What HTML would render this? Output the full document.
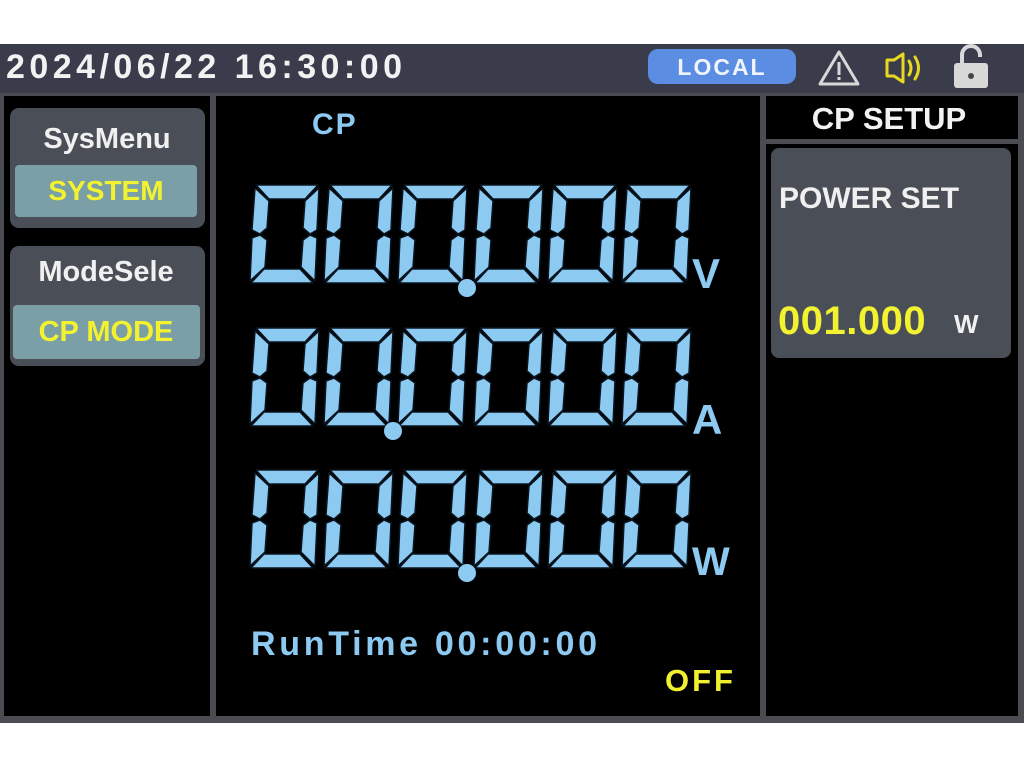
<!DOCTYPE html>
<html><head><meta charset="utf-8"><style>
html,body{margin:0;padding:0;background:#fff;width:1024px;height:768px;overflow:hidden}
svg{display:block}
text{font-family:"Liberation Sans",sans-serif;font-weight:bold}
</style></head><body>
<svg width="1024" height="768" viewBox="0 0 1024 768" xmlns="http://www.w3.org/2000/svg">
<defs>
<g id="d" fill="#8ccaf2" stroke="#0a1520" stroke-width="1.5" stroke-linejoin="round">
<polygon points="4,0 66,0 53,14 17,14"/>
<polygon points="3,3 17,16 15,43 8,49 0,45"/>
<polygon points="67,3 65,45 58,49 51,43 53,16"/>
<polygon points="0,53 8,50 15,55 13,82 -2,96"/>
<polygon points="65,53 63,96 49,82 51,55 58,50"/>
<polygon points="-1,98 61,98 48,84 12,84"/>
</g>
</defs>
<rect x="0" y="0" width="1024" height="768" fill="#fff"/>
<rect x="0" y="44" width="1024" height="679" fill="#4a4c52"/>
<rect x="0" y="44" width="1024" height="49" fill="#3a3c4b"/>
<rect x="4" y="96" width="206" height="620" fill="#000"/>
<rect x="216" y="96" width="544" height="620" fill="#000"/>
<rect x="766" y="96" width="252" height="620" fill="#000"/>
<rect x="766" y="139" width="252" height="5" fill="#4a4c52"/>
<text x="6" y="78" fill="#f2f2f2" font-size="34" textLength="396" lengthAdjust="spacing">2024/06/22 16:30:00</text>
<rect x="648" y="49" width="148" height="35" rx="10" fill="#5b8de2"/>
<text x="722" y="75" fill="#f0f4ff" font-size="23" text-anchor="middle" letter-spacing="2">LOCAL</text>
<polygon points="839,52 858,84 820,84" fill="none" stroke="#d8d8d8" stroke-width="3" stroke-linejoin="round"/>
<rect x="837.5" y="62" width="3" height="13" fill="#d8d8d8"/>
<rect x="837.5" y="77" width="3" height="3" fill="#d8d8d8"/>
<path d="M887,60 h7 l9,-6 v28 l-9,-6 h-7 z" fill="none" stroke="#e8d820" stroke-width="3" stroke-linejoin="round"/>
<path d="M909,61 q4,7 0,14 M915,57 q7,11 0,22" fill="none" stroke="#e8d820" stroke-width="3" stroke-linecap="round"/>
<path d="M962,64 v-9 a9,9 0 0 1 18,0 v2" fill="none" stroke="#d8d8d8" stroke-width="4"/>
<rect x="954" y="63" width="34" height="25" rx="3" fill="#d8d8d8"/>
<circle cx="971" cy="76" r="3" fill="#444"/>
<rect x="10" y="108" width="195" height="120" rx="9" fill="#4a4e57"/>
<rect x="15" y="165" width="182" height="52" rx="4" fill="#7a9fa6"/>
<text x="107" y="148" fill="#f0f0f0" font-size="29" text-anchor="middle">SysMenu</text>
<text x="106" y="200" fill="#f2f230" font-size="28" text-anchor="middle">SYSTEM</text>
<rect x="10" y="246" width="195" height="120" rx="9" fill="#4a4e57"/>
<rect x="13" y="305" width="187" height="54" rx="4" fill="#7a9fa6"/>
<text x="106" y="281" fill="#f0f0f0" font-size="29" text-anchor="middle">ModeSele</text>
<text x="106" y="341" fill="#f2f230" font-size="29" text-anchor="middle">CP MODE</text>
<text x="312" y="134" fill="#8ccaf2" font-size="30" letter-spacing="2">CP</text>
<g>
<use href="#d" x="252" y="185"/><use href="#d" x="326" y="185"/><use href="#d" x="400" y="185"/>
<use href="#d" x="476" y="185"/><use href="#d" x="550" y="185"/><use href="#d" x="624" y="185"/>
<circle cx="467" cy="288" r="9" fill="#8ccaf2"/>
<use href="#d" x="252" y="328"/><use href="#d" x="326" y="328"/><use href="#d" x="400" y="328"/>
<use href="#d" x="476" y="328"/><use href="#d" x="550" y="328"/><use href="#d" x="624" y="328"/>
<circle cx="393" cy="431" r="9" fill="#8ccaf2"/>
<use href="#d" x="252" y="470"/><use href="#d" x="326" y="470"/><use href="#d" x="400" y="470"/>
<use href="#d" x="476" y="470"/><use href="#d" x="550" y="470"/><use href="#d" x="624" y="470"/>
<circle cx="467" cy="573" r="9" fill="#8ccaf2"/>
</g>
<text x="692" y="288" fill="#8ccaf2" font-size="42">V</text>
<text x="692" y="434" fill="#8ccaf2" font-size="42">A</text>
<text x="692" y="575" fill="#8ccaf2" font-size="40">W</text>
<text x="251" y="655" fill="#8ccaf2" font-size="34" textLength="346" lengthAdjust="spacing">RunTime 00:00:00</text>
<text x="665" y="691" fill="#f0f030" font-size="31" letter-spacing="3">OFF</text>
<text x="889" y="129" fill="#f2f2f2" font-size="31" text-anchor="middle">CP SETUP</text>
<rect x="771" y="148" width="240" height="210" rx="8" fill="#4a4e57"/>
<text x="779" y="208" fill="#f0f0f0" font-size="30">POWER SET</text>
<text x="778" y="334" fill="#f2f230" font-size="40" letter-spacing="0.5">001.000</text>
<text x="954" y="333" fill="#f0f0f0" font-size="26">W</text>
</svg>
</body></html>
